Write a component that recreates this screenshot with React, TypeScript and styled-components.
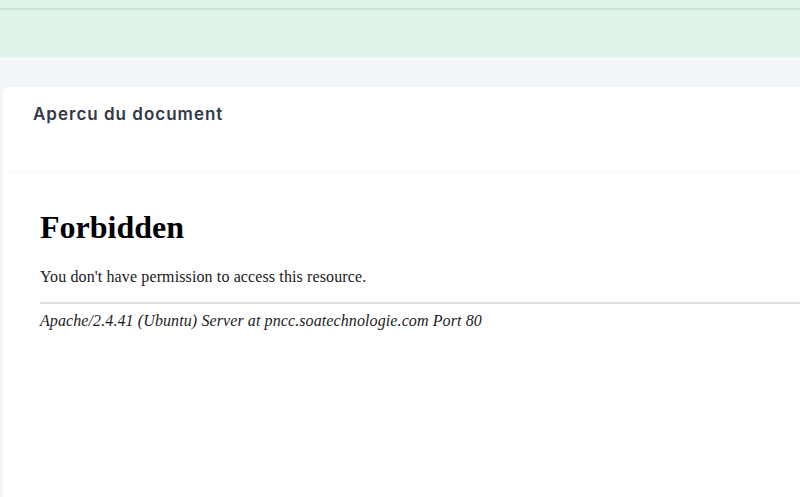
import React from 'react';
import styled, { createGlobalStyle } from 'styled-components';

const GlobalStyle = createGlobalStyle`
  html, body {
    margin: 0;
    padding: 0;
    background: #f2f6fa;
    overflow: hidden;
  }
  * {
    box-sizing: border-box;
  }
`;

function App() {
  return (
    <Page>
      <GlobalStyle />
      <TopBar>
        <TopLine />
      </TopBar>
      <Gap />
      <Card>
        <CardHeader>
          <Title>Apercu du document</Title>
        </CardHeader>
        <CardBody>
          <DocFrame>
            <DocTitle>Forbidden</DocTitle>
            <DocText>You don't have permission to access this resource.</DocText>
            <DocRule />
            <DocAddress>Apache/2.4.41 (Ubuntu) Server at pncc.soatechnologie.com Port 80</DocAddress>
          </DocFrame>
        </CardBody>
      </Card>
    </Page>
  );
}

export default App;

const Page = styled.div`
  width: 800px;
  height: 497px;
  overflow: hidden;
  background: #f2f6fa;
`;

const TopBar = styled.div`
  height: 57px;
  background: #ddf4e6;
  padding-top: 8px;
`;

const TopLine = styled.div`
  height: 2px;
  background: #cce4d6;
`;

const Gap = styled.div`
  height: 30px;
`;

const Card = styled.div`
  margin-left: 3px;
  width: 860px;
  height: 420px;
  background: #ffffff;
  border-radius: 6px 0 0 0;
`;

const CardHeader = styled.div`
  height: 86px;
  padding: 15px 30px 0;
  border-bottom: 1px solid #f4f6f8;
`;

const Title = styled.h2`
  margin: 0;
  font-family: Inter, 'Open Sans', sans-serif;
  font-size: 17px;
  font-weight: 600;
  letter-spacing: 1px;
  line-height: 24px;
  color: #33374a;
`;

const CardBody = styled.div`
  padding: 0 0 0 37px;
`;

const DocFrame = styled.div`
  padding-top: 15px;
  font-family: 'Liberation Serif', 'Times New Roman', serif;
  color: #000;
  display: flow-root;
`;

const DocTitle = styled.h1`
  font-size: 32px;
  font-weight: bold;
  margin: 21.44px 0;
`;

const DocText = styled.p`
  font-size: 16px;
  letter-spacing: 0.12px;
  margin: 16px 0;
  color: #1a1a1a;
`;

const DocRule = styled.hr`
  margin: 8px 0;
  height: 0;
  border: none;
  border-top: 2px solid #dedede;
`;

const DocAddress = styled.address`
  font-size: 16px;
  font-style: italic;
  letter-spacing: 0.1px;
  color: #222;
`;
